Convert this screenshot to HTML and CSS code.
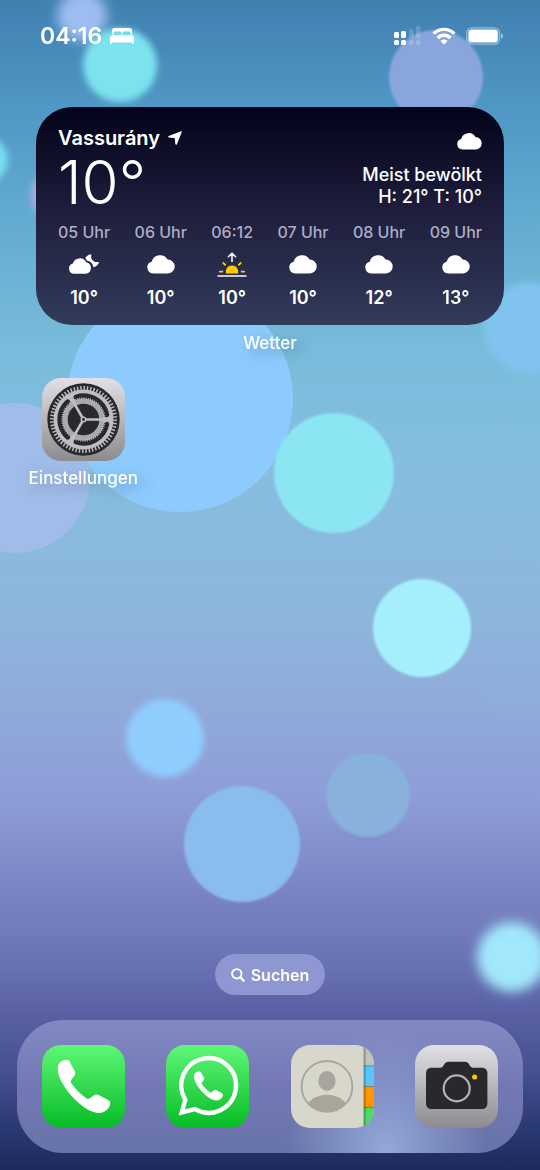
FILE: index.html
```html
<!DOCTYPE html>
<html lang="de">
<head>
    <meta charset="UTF-8">
    <meta name="viewport" content="width=device-width, initial-scale=1.0">
    <title>Home</title>
    <link rel="stylesheet" href="styles.css">
</head>
<body>
    <!-- Wallpaper -->
    <svg class="wallpaper" viewBox="0 0 540 1170" preserveAspectRatio="xMidYMid slice" aria-hidden="true">
        <defs>
            <linearGradient id="sky" x1="0" y1="0" x2="0" y2="1">
                <stop offset="0" stop-color="#4080b1"/>
                <stop offset="0.09" stop-color="#4f97c5"/>
                <stop offset="0.18" stop-color="#61aacf"/>
                <stop offset="0.3" stop-color="#79bcdb"/>
                <stop offset="0.4" stop-color="#86bedf"/>
                <stop offset="0.53" stop-color="#8db6dc"/>
                <stop offset="0.61" stop-color="#90a9d9"/>
                <stop offset="0.68" stop-color="#8e9dd8"/>
                <stop offset="0.76" stop-color="#7c85c4"/>
                <stop offset="0.82" stop-color="#6a73b4"/>
                <stop offset="0.87" stop-color="#575fa2"/>
                <stop offset="0.92" stop-color="#434f8f"/>
                <stop offset="0.97" stop-color="#28366f"/>
                <stop offset="1" stop-color="#1e2a5c"/>
            </linearGradient>
            <filter id="soft" x="-20%" y="-20%" width="140%" height="140%"><feGaussianBlur stdDeviation="1"/></filter>
            <filter id="blur" x="-20%" y="-20%" width="140%" height="140%"><feGaussianBlur stdDeviation="3"/></filter>
            <filter id="haze" x="-50%" y="-50%" width="200%" height="200%"><feGaussianBlur stdDeviation="6"/></filter>
        </defs>
        <rect width="540" height="1170" fill="url(#sky)"/>
        <circle cx="82" cy="16" r="25" fill="#9dbdf0" filter="url(#haze)"/>
        <circle cx="120" cy="65" r="37" fill="#7be2ee" filter="url(#blur)"/>
        <circle cx="436" cy="77" r="47" fill="#88a6dc" filter="url(#soft)"/>
        <circle cx="-16" cy="160" r="24" fill="#78dcf0" filter="url(#blur)"/>
        <circle cx="54" cy="195" r="24" fill="#9fabe0" filter="url(#blur)"/>
        <circle cx="530" cy="328" r="46" fill="#7fc3ee" filter="url(#blur)"/>
        <circle cx="180" cy="399" r="113" fill="#8dcbfe"/>
        <circle cx="15" cy="478" r="75" fill="#a0bce8"/>
        <circle cx="334" cy="473" r="60" fill="#8ce5f3" filter="url(#soft)"/>
        <circle cx="422" cy="628" r="49" fill="#a5effd" filter="url(#soft)"/>
        <circle cx="516" cy="682" r="36" fill="#8fb1de" opacity="0.4" filter="url(#haze)"/>
        <circle cx="165" cy="738" r="39" fill="#8fcdfe" filter="url(#blur)"/>
        <circle cx="368" cy="795" r="42" fill="#88b1dc" filter="url(#soft)"/>
        <circle cx="242" cy="844" r="58" fill="#8abcee" filter="url(#soft)"/>
        <circle cx="512" cy="957" r="35" fill="#a1e8fc" filter="url(#haze)"/>
    </svg>

    <!-- Shared shapes -->
    <svg class="defs" aria-hidden="true">
        <defs>
            <linearGradient id="silver" x1="0" y1="0" x2="0" y2="1">
                <stop offset="0" stop-color="#e1e0e5"/>
                <stop offset="1" stop-color="#8d8b90"/>
            </linearGradient>
            <linearGradient id="green" x1="0" y1="0" x2="0" y2="1">
                <stop offset="0" stop-color="#5ff777"/>
                <stop offset="1" stop-color="#07bb26"/>
            </linearGradient>
            <symbol id="cloud" viewBox="0 0 28 20">
                <path d="M6.2 19.4A5.9 5.9 0 0 1 4.7 7.8A8.6 8.6 0 0 1 20.6 5.6A6.9 6.9 0 0 1 21 19.4Z"/>
            </symbol>
            <symbol id="handset" viewBox="0 0 53 54">
                <path d="M0.2 7.5 C0.7 3.5 4.5 0.8 8.5 0.2 C10 0 11.2 0.6 12 2 L17.2 11.5 C18.2 13.5 17.8 15 16.7 16.5 L14 20 C13 21.5 13 22.5 14 24 C17.7 29.5 23.2 35 28.7 38.7 C30.2 39.7 31.2 39.5 32.7 38.5 L36.2 36 C37.7 35 39.7 34.7 41.7 35.7 L50.7 40.5 C52.7 41.7 53.2 43.3 52.5 45.5 C51.2 50 46.2 53.5 41.2 53.5 C35.2 53.5 26 48.5 17 39.5 C6 28.5 -0.8 15.5 0.2 7.5Z"/>
            </symbol>
        </defs>
    </svg>

    <header class="status-bar">
        <div class="status-group">
            <time class="clock">04:16</time>
            <svg class="bed" viewBox="0 0 24 16" fill="#fff">
                <path d="M2 6.5V2.6C2 1 3 0 4.6 0H19.4C21 0 22 1 22 2.6V6.5H20.5V5.2C20.5 4.2 20 3.6 19 3.6H14C13 3.6 12.5 4.2 12.5 5.2V6.5H11.5V5.2C11.5 4.2 11 3.6 10 3.6H5C4 3.6 3.5 4.2 3.5 5.2V6.5Z"/>
                <path d="M0 10C0 8.4 1 7.2 2.6 7.2H21.4C23 7.2 24 8.4 24 10V16H22.4V14.6H1.6V16H0Z"/>
            </svg>
        </div>
        <div class="status-group status-right">
            <svg class="signal" viewBox="0 0 28 20" fill="#fff">
                <rect x="0" y="6" width="5" height="6" rx="1.5"/>
                <rect x="7" y="5" width="5" height="7" rx="1.5"/>
                <rect x="0" y="14" width="5" height="5" rx="1.5"/>
                <rect x="7" y="14" width="5" height="5" rx="1.5"/>
                <g opacity="0.18">
                    <rect x="15" y="3" width="4.5" height="9" rx="1.5"/>
                    <rect x="22" y="0" width="4.5" height="12" rx="1.5"/>
                    <rect x="15" y="14" width="4.5" height="5" rx="1.5"/>
                    <rect x="22" y="14" width="4.5" height="5" rx="1.5"/>
                </g>
            </svg>
            <svg class="wifi" viewBox="0 0 24 18" fill="none" stroke="#fff" stroke-width="3.4">
                <path d="M1.6 6.6C7.4 1 16.6 1 22.4 6.6"/>
                <path d="M5.6 11C9.2 7.4 14.8 7.4 18.4 11"/>
                <path d="M12 17.6L8.4 14C10.4 12 13.6 12 15.6 14Z" fill="#fff" stroke="none"/>
            </svg>
            <svg class="battery" viewBox="0 0 38 18">
                <rect x="0.8" y="0.8" width="32.6" height="16.4" rx="5" fill="none" stroke="#fff" stroke-opacity="0.45" stroke-width="1.3"/>
                <rect x="2.4" y="2.4" width="29.4" height="13.2" rx="3.4" fill="#fff"/>
                <path d="M35 6.2C37.6 7 37.6 11 35 11.8Z" fill="#fff" fill-opacity="0.55"/>
            </svg>
        </div>
    </header>

    <main class="home">
        <section class="widget-cell">
            <a class="widget" href="#wetter" aria-label="Wetter öffnen">
                <div class="widget-top">
                    <div>
                        <div class="city">
                            Vassurány
                            <svg class="arrow" viewBox="0 0 14 14" fill="#fff"><path d="M13.1 0.3C13.7 0.1 14 0.5 13.8 1L8.9 13.2C8.6 14 7.4 13.9 7.3 13L6.9 8.2C6.8 7.4 6.5 7.1 5.8 7L0.9 6.6C0.1 6.5 -0.1 5.4 0.7 5.1Z"/></svg>
                        </div>
                        <div class="now">10°</div>
                    </div>
                    <div class="summary">
                        <svg class="cloud-small" fill="#fff"><use href="#cloud"/></svg>
                        <div>Meist bewölkt</div>
                        <div>H: 21° T: 10°</div>
                    </div>
                </div>
                <ul class="hours">
                    <li>
                        <span class="hour">05 Uhr</span>
                        <svg class="sky-icon" viewBox="0 0 32 26" fill="#fff">
                            <path d="M6 22.8A5.2 5.2 0 0 1 4.9 12.6A7.2 7.2 0 0 1 18.2 11.2A5.9 5.9 0 0 1 18 22.8Z"/>
                            <path d="M22.6 3.2C23.1 3 23.5 3.4 23.3 3.9C22.3 8 25.6 11.6 29.8 10.9C30.6 10.8 31.1 11.4 30.8 12C29.8 14.3 27.7 15.9 25.3 16.3C25.1 12.9 22.6 10.2 19.2 9.8C18.6 8.6 17.9 7.8 17.2 7.1C18.2 5.3 20.2 3.8 22.6 3.2Z"/>
                        </svg>
                        <span class="temp">10°</span>
                    </li>
                    <li>
                        <span class="hour">06 Uhr</span>
                        <svg class="sky-icon cloud" fill="#fff"><use href="#cloud"/></svg>
                        <span class="temp">10°</span>
                    </li>
                    <li>
                        <span class="hour">06:12</span>
                        <svg class="sky-icon" viewBox="0 0 32 26" fill="none" stroke-linecap="round" stroke-linejoin="round">
                            <path d="M10 22.6C9 18 12 14.6 16 14.6C20 14.6 23 18 22 22.6Z" fill="#fc0"/>
                            <path d="M3.8 20.6H6.4M28.2 20.6H25.6M7.3 12L9.2 13.9M24.7 12L22.8 13.9" stroke="#fc0" stroke-width="1.8"/>
                            <path d="M16 10.4V2.6M12.4 5.8L16 2.2L19.6 5.8" stroke="#fff" stroke-width="1.6"/>
                            <path d="M2.2 25H29.8" stroke="#fff" stroke-width="1.7"/>
                        </svg>
                        <span class="temp">10°</span>
                    </li>
                    <li>
                        <span class="hour">07 Uhr</span>
                        <svg class="sky-icon cloud" fill="#fff"><use href="#cloud"/></svg>
                        <span class="temp">10°</span>
                    </li>
                    <li>
                        <span class="hour">08 Uhr</span>
                        <svg class="sky-icon cloud" fill="#fff"><use href="#cloud"/></svg>
                        <span class="temp">12°</span>
                    </li>
                    <li>
                        <span class="hour">09 Uhr</span>
                        <svg class="sky-icon cloud" fill="#fff"><use href="#cloud"/></svg>
                        <span class="temp">13°</span>
                    </li>
                </ul>
            </a>
            <span class="label">Wetter</span>
        </section>

        <a class="app" href="#einstellungen">
            <svg class="app-icon" viewBox="0 0 83 83">
                <rect width="83" height="83" fill="url(#silver)"/>
                <circle cx="41.5" cy="41.5" r="36.2" fill="#29292b"/>
                <circle cx="41.5" cy="41.5" r="30" fill="#bebdc1"/>
                <circle cx="41.5" cy="41.5" r="31.6" fill="none" stroke="#bebdc1" stroke-width="3.8" pathLength="120" stroke-dasharray="0.9 1.1"/>
                <g fill="none" stroke="#29292b" stroke-width="5.2" stroke-linecap="round">
                    <path d="M64.6 46.4A23.6 23.6 0 0 1 34.2 63.9"/>
                    <path d="M25.7 59A23.6 23.6 0 0 1 25.7 24"/>
                    <path d="M34.2 19.1A23.6 23.6 0 0 1 64.6 36.6"/>
                </g>
                <circle cx="41.5" cy="41.5" r="21.2" fill="none" stroke="#bebdc1" stroke-width="2" pathLength="120" stroke-dasharray="0.9 1.1"/>
                <circle cx="41.5" cy="41.5" r="18" fill="none" stroke="#a9a8ac" stroke-width="4.8"/>
                <circle cx="41.5" cy="41.5" r="15.8" fill="#29292b"/>
                <path d="M41.5 41.5H68M41.5 41.5L28.2 18.5M41.5 41.5L28.2 64.5" stroke="#bebdc1" stroke-width="2.6"/>
                <circle cx="41.5" cy="41.5" r="3" fill="#bebdc1"/>
                <circle cx="41.5" cy="41.5" r="1.4" fill="#29292b"/>
            </svg>
            <span class="label">Einstellungen</span>
        </a>
    </main>

    <button class="search" type="button">
        <svg class="search-icon" viewBox="0 0 14 14" fill="none" stroke="#fff" stroke-linecap="round">
            <circle cx="5.8" cy="5.8" r="4.7" stroke-width="1.9"/>
            <path d="M9.4 9.4L12.6 12.6" stroke-width="2.3"/>
        </svg>
        Suchen
    </button>

    <nav class="dock">
        <a href="#telefon" aria-label="Telefon">
            <svg class="app-icon" viewBox="0 0 83 83">
                <rect width="83" height="83" fill="url(#green)"/>
                <use href="#handset" x="15.5" y="14.5" width="53" height="54" fill="#fff"/>
            </svg>
        </a>
        <a href="#whatsapp" aria-label="WhatsApp">
            <svg class="app-icon" viewBox="0 0 83 83">
                <rect width="83" height="83" fill="url(#green)"/>
                <path d="M15.8 67.4L19.3 54.8A27.4 27.4 0 1 1 29 64.2Z" fill="none" stroke="#fff" stroke-width="4.4"/>
                <use href="#handset" x="27.5" y="26.5" width="30" height="29" fill="#fff" stroke="#fff" stroke-width="1.4"/>
            </svg>
        </a>
        <a href="#kontakte" aria-label="Kontakte">
            <svg class="app-icon" viewBox="0 0 83 83">
                <defs>
                    <clipPath id="person"><circle cx="36" cy="41.4" r="25.6"/></clipPath>
                    <linearGradient id="fold" x1="0" x2="1">
                        <stop offset="0" stop-color="#000" stop-opacity="0.35"/>
                        <stop offset="1" stop-color="#000" stop-opacity="0"/>
                    </linearGradient>
                </defs>
                <rect width="83" height="83" fill="#d8d7cb"/>
                <rect x="72.7" width="10.3" height="20.8" fill="#c3c2bb"/>
                <rect x="72.7" y="20.8" width="10.3" height="20.8" fill="#5ac5fb"/>
                <rect x="72.7" y="41.6" width="10.3" height="20.8" fill="#fd9500"/>
                <rect x="72.7" y="62.4" width="10.3" height="20.6" fill="#4fd865"/>
                <path d="M72.7 20.8H83M72.7 41.6H83M72.7 62.4H83" stroke="#000" stroke-opacity="0.3"/>
                <rect x="72.7" width="3" height="83" fill="url(#fold)"/>
                <g fill="#a8a69c">
                    <ellipse cx="36" cy="36" rx="8.6" ry="9.9"/>
                    <ellipse cx="36" cy="64" rx="20.5" ry="14.2" clip-path="url(#person)"/>
                </g>
                <circle cx="36" cy="41.4" r="25.4" fill="none" stroke="#a8a69c" stroke-width="1.9"/>
            </svg>
        </a>
        <a href="#kamera" aria-label="Kamera">
            <svg class="app-icon" viewBox="0 0 83 83">
                <rect width="83" height="83" fill="url(#silver)"/>
                <path d="M17 22.8H24.5C26.5 22.8 27.4 22.2 28.4 20.8L29.8 18.6C30.8 17.2 32 16.7 33.8 16.7H49.6C51.4 16.7 52.6 17.2 53.6 18.6L55 20.8C56 22.2 57 22.8 58.8 22.8H66.4C70.4 22.8 72.4 24.8 72.4 28.8V58C72.4 62 70.4 64 66.4 64H17C13 64 11 62 11 58V28.8C11 24.8 13 22.8 17 22.8Z" fill="#29292b"/>
                <circle cx="41.7" cy="43.4" r="13" fill="#29292b" stroke="#b4b3b8" stroke-width="2.2"/>
                <circle cx="59.6" cy="32" r="2.5" fill="#fc0"/>
            </svg>
        </a>
    </nav>
</body>
</html>
```

FILE: styles.css
```css
* {
    box-sizing: border-box;
}

body {
    margin: 0;
    min-height: 100vh;
    display: flex;
    flex-direction: column;
    font-family: Inter, "Noto Sans", sans-serif;
    font-weight: 500;
    color: #fff;
    background-color: #1e2a5c;
    overflow-x: hidden;
}

a {
    color: inherit;
    text-decoration: none;
}

svg {
    display: block;
}

.wallpaper {
    position: fixed;
    inset: 0;
    width: 100%;
    height: 100%;
    z-index: -1;
}

.defs {
    width: 0;
    height: 0;
    position: absolute;
}

/* Status bar */
.status-bar {
    display: flex;
    justify-content: space-between;
    align-items: center;
    padding: 22px 36px 0 40px;
}

.status-group {
    display: flex;
    align-items: center;
    gap: 8px;
}

.status-right {
    gap: 10px;
}

.clock {
    font-size: 23px;
    line-height: 28px;
    font-weight: 600;
}

.bed {
    width: 24px;
    height: 16px;
}

.signal {
    width: 28px;
    height: 20px;
}

.wifi {
    width: 24px;
    height: 18px;
}

.battery {
    width: 38px;
    height: 18px;
}

/* Home screen grid */
.home {
    flex: 1;
    display: grid;
    grid-template-columns: repeat(4, 1fr);
    align-content: start;
    row-gap: 25px;
    padding: 57px 21px 24px;
}

.label {
    font-size: 17px;
    line-height: 20px;
    text-shadow: 6px 4px 16px rgba(0, 40, 80, 0.4);
}

.widget-cell {
    grid-column: 1 / -1;
    display: flex;
    flex-direction: column;
    align-items: center;
    gap: 8px;
    padding: 0 15px;
}

.widget {
    width: 100%;
    padding: 20px 22px 16px;
    border-radius: 36px;
    background: linear-gradient(#02031a, #1d1c3a 45%, #323b5b);
}

.widget-top {
    display: flex;
    justify-content: space-between;
}

.city {
    display: flex;
    align-items: center;
    gap: 8px;
    font-size: 20px;
    line-height: 22px;
    font-weight: 600;
}

.arrow {
    width: 14px;
    height: 14px;
}

.now {
    font-size: 60px;
    line-height: 66px;
    font-weight: 300;
}

.summary {
    font-size: 18px;
    line-height: 22px;
    text-align: right;
}

.cloud-small {
    width: 25px;
    height: 18px;
    margin: 5px 0 14px auto;
}

.hours {
    display: flex;
    justify-content: space-between;
    list-style: none;
    margin: 7px 0 0;
    padding: 0;
}

.hours li {
    display: flex;
    flex-direction: column;
    align-items: center;
}

.hour {
    font-size: 16px;
    line-height: 20px;
    color: #aeadc6;
}

.sky-icon {
    width: 32px;
    height: 26px;
    margin: 9px 0 10px;
}

.sky-icon.cloud {
    width: 28px;
    height: 20px;
    margin: 12px 0 13px;
}

.temp {
    font-size: 18px;
    line-height: 22px;
    font-weight: 600;
}

/* Apps */
.app {
    display: flex;
    flex-direction: column;
    align-items: center;
    gap: 7px;
}

.app-icon {
    width: 83px;
    height: 83px;
    border-radius: 19px;
}

/* Search pill */
.search {
    align-self: center;
    display: flex;
    align-items: center;
    gap: 6px;
    height: 41px;
    padding: 0 16px;
    border: none;
    border-radius: 21px;
    background-color: #8f97d2;
    color: #fff;
    font-family: inherit;
    font-size: 16px;
    font-weight: 600;
    cursor: pointer;
}

.search-icon {
    width: 14px;
    height: 14px;
}

/* Dock */
.dock {
    display: flex;
    justify-content: space-between;
    margin: 25px 17px 17px;
    padding: 25px;
    border-radius: 46px;
    background:
        radial-gradient(ellipse 100px 130px at 73% 100%, rgba(155, 177, 225, 0.85), rgba(155, 177, 225, 0)),
        linear-gradient(#8189c3, #7378b4 50%, #6773a8);
}
```
